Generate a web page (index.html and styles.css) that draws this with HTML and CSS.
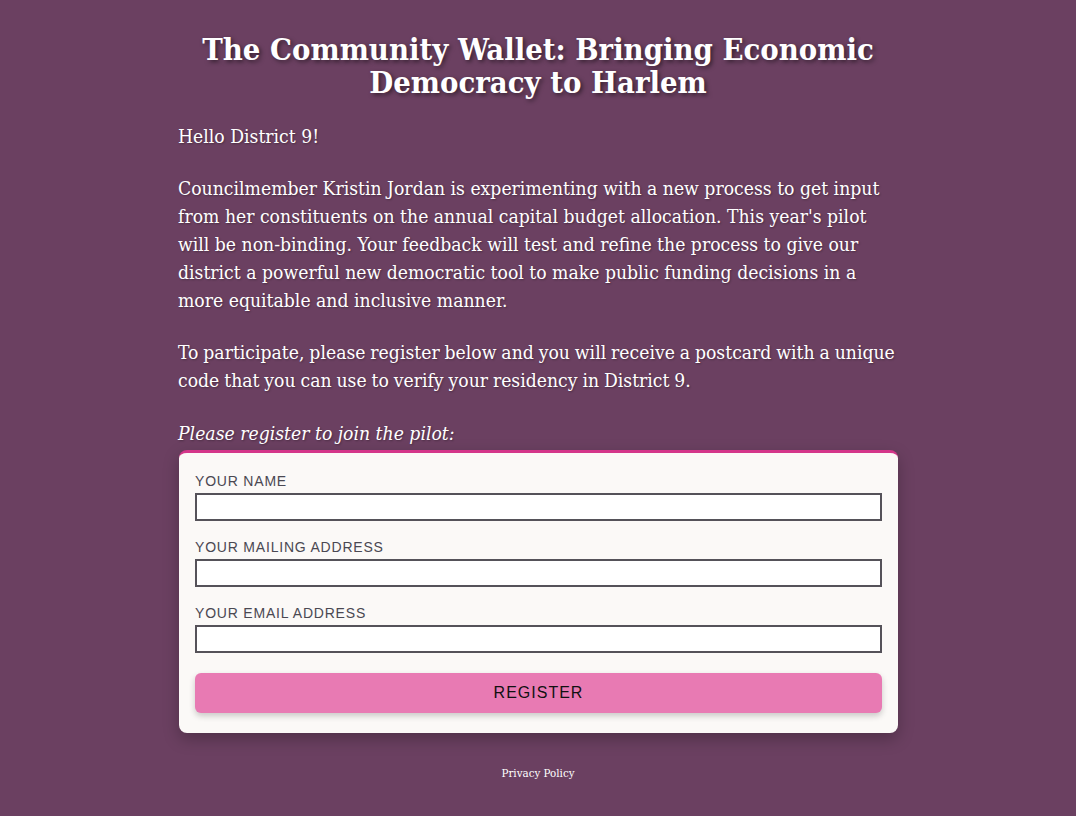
FILE: index.html
```html
<!DOCTYPE html>
<html lang="en">
<head>
<meta charset="utf-8">
<title>The Community Wallet</title>
<link rel="stylesheet" href="styles.css">
</head>
<body>
<main class="page">
  <h1 class="title">The Community Wallet: Bringing Economic Democracy to Harlem</h1>
  <p class="text">Hello District 9!</p>
  <p class="text">Councilmember Kristin Jordan is experimenting with a new process to get input from her constituents on the annual capital budget allocation. This year's pilot will be non-binding. Your feedback will test and refine the process to give our district a powerful new democratic tool to make public funding decisions in a more equitable and inclusive manner.</p>
  <p class="text text-tight">To participate, please register below and you will receive a postcard with a unique code that you can use to verify your residency in District 9.</p>
  <p class="prompt">Please register to join the pilot:</p>
  <form class="card">
    <label class="field">
      <span class="label">Your Name</span>
      <input class="input" type="text">
    </label>
    <label class="field">
      <span class="label">Your Mailing Address</span>
      <input class="input" type="text">
    </label>
    <label class="field">
      <span class="label">Your Email Address</span>
      <input class="input" type="email">
    </label>
    <button class="button" type="button">Register</button>
  </form>
  <footer class="footer"><a class="footer-link" href="#">Privacy Policy</a></footer>
</main>
</body>
</html>
```
FILE: styles.css
```css
html, body {
  margin: 0;
  padding: 0;
}
body {
  background: #6b4061;
  color: #ffffff;
  font-family: "DejaVu Serif Condensed", "DejaVu Serif", serif;
  min-height: 816px;
}
.page {
  width: 720px;
  margin: 0 auto;
  padding-top: 33px;
  display: flex;
  flex-direction: column;
}
.title {
  font-size: 30.7px;
  line-height: 33px;
  font-weight: bold;
  text-align: center;
  margin: 0 0 24px;
  text-shadow: 2px 2px 4px rgba(0, 0, 0, 0.5);
}
.text {
  font-size: 19.2px;
  line-height: 28px;
  margin: 0 0 24px;
  text-shadow: 1px 1px 2px rgba(0, 0, 0, 0.3);
}
.text-tight {
  word-spacing: -0.6px;
}
.prompt {
  font-size: 19.2px;
  font-style: italic;
  line-height: 28px;
  margin: 1px 0 2px;
  text-shadow: 1px 1px 2px rgba(0, 0, 0, 0.3);
}
.card {
  background: #fbf9f7;
  border-top: 3px solid #d4368a;
  border-radius: 8px;
  padding: 19px 16px 20px;
  box-shadow: 0 6px 16px rgba(0, 0, 0, 0.25);
  display: flex;
  flex-direction: column;
  gap: 17px;
  margin-left: 1px;
}
.field {
  display: flex;
  flex-direction: column;
  gap: 3px;
}
.label {
  font-family: "Liberation Sans", Arial, sans-serif;
  font-size: 14px;
  line-height: 18px;
  letter-spacing: 0.8px;
  text-transform: uppercase;
  color: #4a4852;
}
.input {
  height: 28px;
  box-sizing: border-box;
  border: 2px solid #555259;
  background: #ffffff;
  margin: 0;
  padding: 0 6px;
}
.button {
  margin-top: 3px;
  height: 40px;
  border: none;
  border-radius: 6px;
  background: #e87ab3;
  color: #111111;
  font-family: "Liberation Sans", Arial, sans-serif;
  font-size: 16px;
  letter-spacing: 1px;
  text-transform: uppercase;
  box-shadow: 0 3px 6px rgba(0, 0, 0, 0.2);
}
.footer {
  text-align: center;
  padding-top: 29px;
}
.footer-link {
  color: #ffffff;
  font-size: 11.5px;
  text-decoration: none;
}
```
